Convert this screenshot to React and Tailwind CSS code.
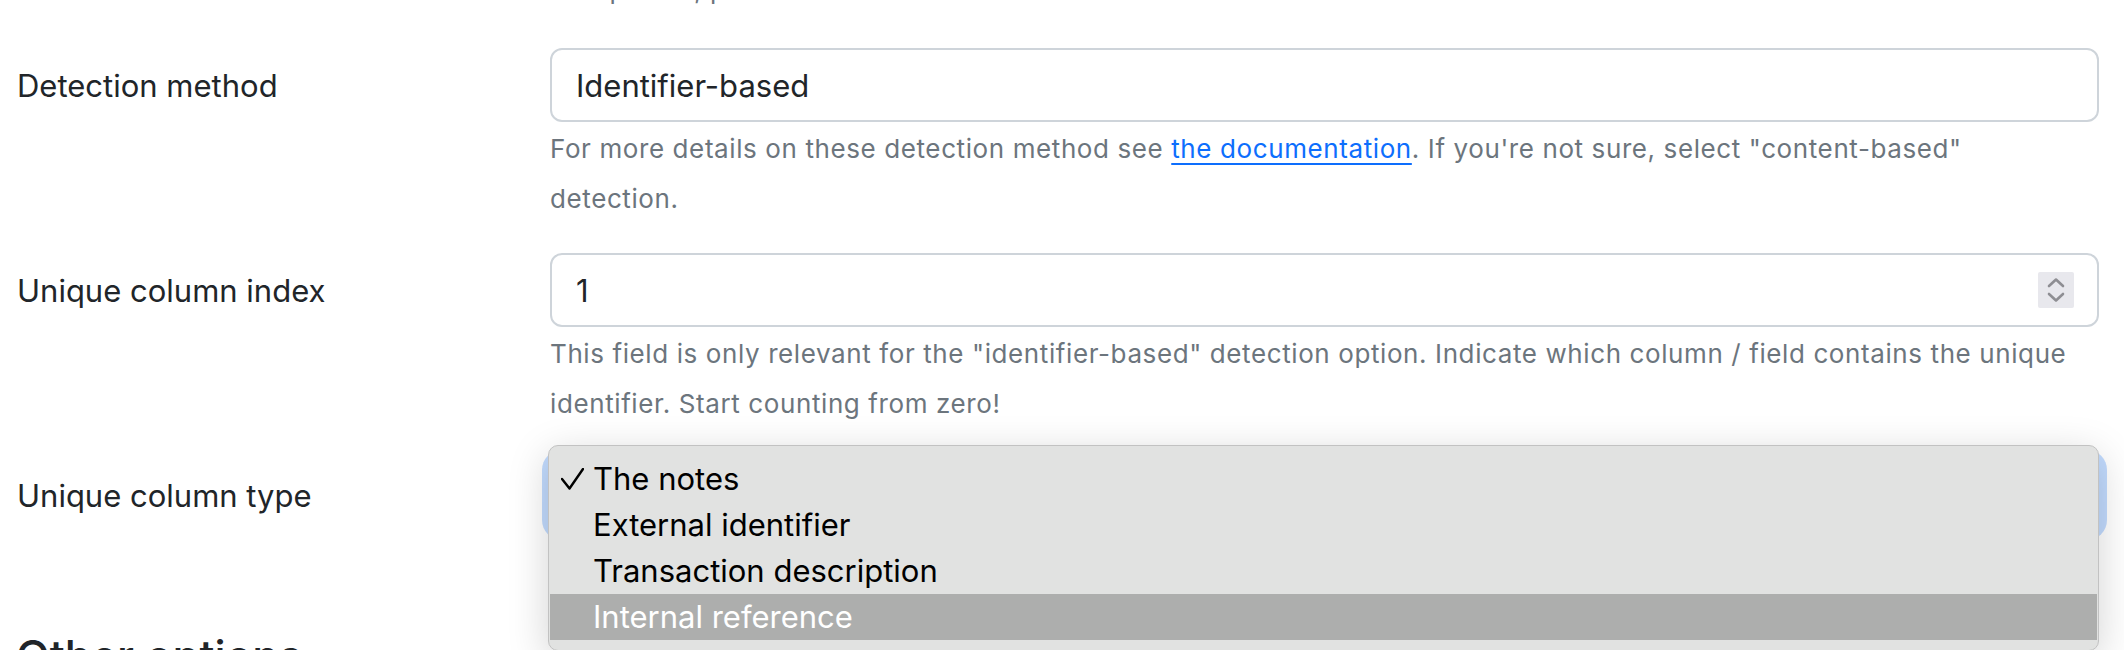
import React from "react";

function CheckMark() {
  return (
    <svg width="23" height="22" viewBox="0 0 23 22" className="ml-[11px]">
      <polyline points="1,11 8.5,20.5 22,1" fill="none" stroke="#000" strokeWidth="2.4" strokeLinecap="round" strokeLinejoin="round" />
    </svg>
  );
}

function Spinner() {
  return (
    <div className="w-[36px] h-[36px] bg-[#e8e8ed] rounded-[2px]">
      <svg width="36" height="36" viewBox="0 0 36 36">
        <polyline points="11,14 18,7.5 25,14" fill="none" stroke="#8e8e93" strokeWidth="2.6" strokeLinecap="round" strokeLinejoin="round" />
        <polyline points="11,22 18,28.5 25,22" fill="none" stroke="#8e8e93" strokeWidth="2.6" strokeLinecap="round" strokeLinejoin="round" />
      </svg>
    </div>
  );
}

export default function App() {
  const items = [
    { label: "The notes", checked: true },
    { label: "External identifier" },
    { label: "Transaction description" },
    { label: "Internal reference", active: true },
  ];
  return (
    <div className="relative w-[2124px] h-[650px] overflow-hidden bg-white text-[#212529] font-['Inter','Noto_Sans',sans-serif]">
      <div className="flex flex-col">
        {/* cut-off help text of previous field */}
        <div className="flex -mt-[35px]">
          <div className="w-[550px] shrink-0" />
          <p className="text-[26px] tracking-[0.6px] leading-[50px] text-[#6c757d]">is imported, plus a few.</p>
        </div>

        {/* Detection method */}
        <div className="flex mt-[33px]">
          <label className="w-[550px] shrink-0 pl-[17px] pt-[2px] h-[74px] flex items-center text-[31px]">Detection method</label>
          <div className="w-[1549px] shrink-0">
            <div className="h-[74px] border-2 border-[#ced4da] rounded-[12px] flex items-center pt-[2px] px-[24px] text-[31px]">Identifier-based</div>
            <p className="mt-[2px] text-[26px] tracking-[0.6px] leading-[50px] text-[#6c757d] whitespace-nowrap">
              For more details on these detection method see{" "}
              <a href="#" className="text-[#0d6efd] underline decoration-2 underline-offset-[5px]">the documentation</a>
              . If you're not sure, select "content-based"
              <br />
              detection.
            </p>
          </div>
        </div>

        {/* Unique column index */}
        <div className="flex mt-[29px]">
          <label className="w-[550px] shrink-0 pl-[17px] pt-[2px] h-[74px] flex items-center text-[31px]">Unique column index</label>
          <div className="w-[1549px] shrink-0">
            <div className="h-[74px] border-2 border-[#ced4da] rounded-[12px] flex items-center justify-between pl-[24px] pr-[23px] text-[31px]">
              <span className="pt-[2px]">1</span>
              <Spinner />
            </div>
            <p className="mt-[2px] text-[26px] tracking-[0.6px] leading-[50px] text-[#6c757d] whitespace-nowrap">
              This field is only relevant for the "identifier-based" detection option. Indicate which column / field contains the unique
              <br />
              identifier. Start counting from zero!
            </p>
          </div>
        </div>

        {/* Unique column type */}
        <div className="flex mt-[29px]">
          <label className="w-[550px] shrink-0 pl-[17px] pt-[2px] h-[74px] flex items-center text-[31px]">Unique column type</label>
          <div className="w-[1549px] shrink-0">
            <div className="h-[74px] border-2 border-[#86b7fe] rounded-[12px] shadow-[0_0_0_8px_rgba(13,110,253,0.25)]" />
          </div>
        </div>

        <h3 className="mt-[98px] pl-[16px] text-[44px] leading-[1.2] font-medium">Other options</h3>
      </div>

      {/* native select popup */}
      <div className="absolute left-[548px] top-[445px] w-[1551px] h-[206px] rounded-[10px] bg-[#e1e2e1] border border-[#c2c2c2] pt-[10px] px-[1px] shadow-[0_10px_40px_rgba(0,0,0,0.18)]">
        {items.map((it) => (
          <div
            key={it.label}
            className={
              "flex items-center h-[46px] text-[31px] leading-[46px] " +
              (it.active ? "bg-[#adaead] text-white" : "text-black")
            }
          >
            <div className="w-[43px] shrink-0 flex items-center">{it.checked ? <CheckMark /> : null}</div>
            <span>{it.label}</span>
          </div>
        ))}
      </div>
    </div>
  );
}
